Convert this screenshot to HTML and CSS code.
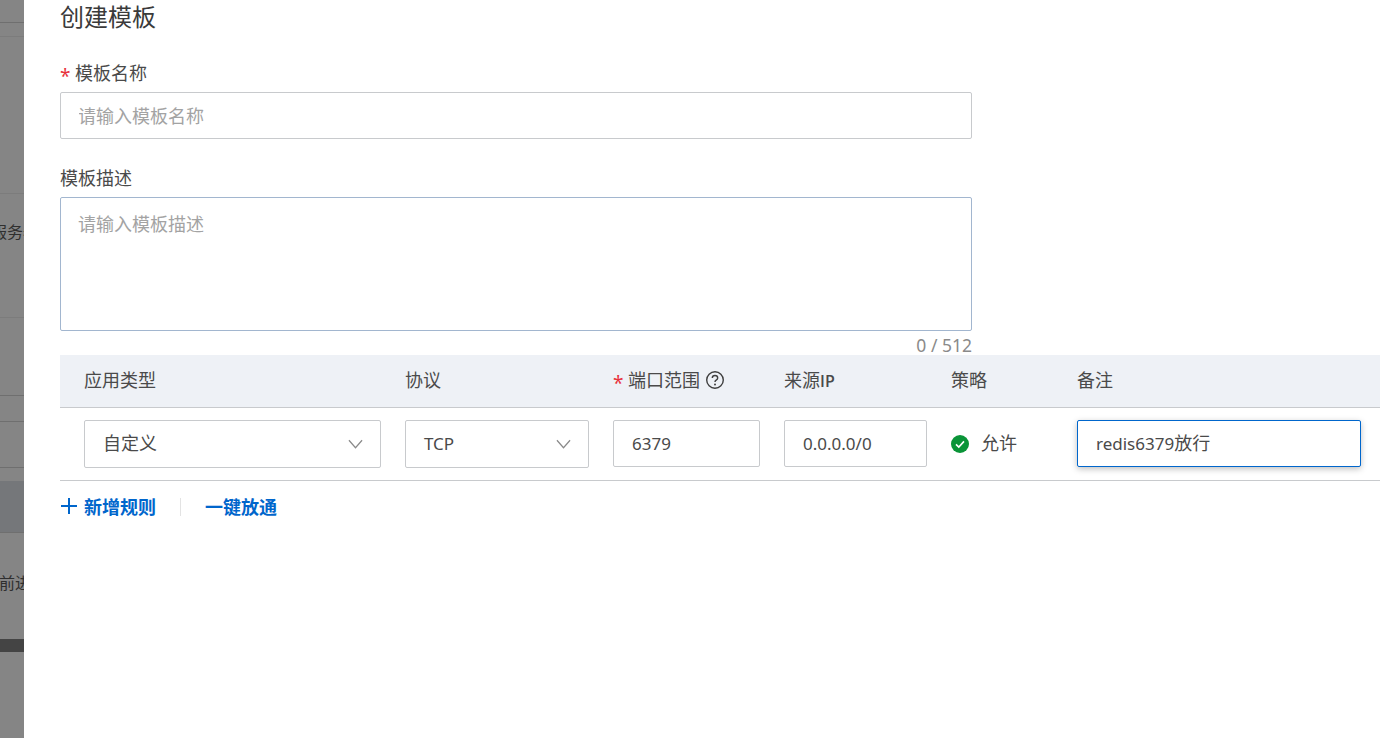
FILE: index.html
```html
<!DOCTYPE html>
<html lang="zh-CN">
<head>
<meta charset="utf-8">
<title>创建模板</title>
<link rel="stylesheet" href="styles.css">
</head>
<body>
<div class="page">
  <div class="backdrop" aria-hidden="true">
    <div class="bd-row line"></div>
    <div class="bd-row faint"></div>
    <div class="bd-row faint"></div>
    <div class="bd-row faint bd-text-top"><span>服务器</span></div>
    <div class="bd-row line"></div>
    <div class="bd-row line"></div>
    <div class="bd-row line"></div>
    <div class="bd-row"></div>
    <div class="bd-row cool line"></div>
    <div class="bd-row bd-text-mid"><span>前进</span></div>
    <div class="bd-row"></div>
    <div class="bd-row dark"></div>
    <div class="bd-row"></div>
  </div>
  <main class="drawer">
    <h1 class="title">创建模板</h1>
    <label class="label"><span class="star">*</span>模板名称</label>
    <input class="field name-field" type="text" placeholder="请输入模板名称">
    <label class="label desc-label">模板描述</label>
    <textarea class="field desc-field" placeholder="请输入模板描述"></textarea>
    <div class="counter">0 / 512</div>

    <div class="table">
      <div class="grid head">
        <div>应用类型</div>
        <div>协议</div>
        <div class="port-head"><span><span class="star">*</span>端口范围</span><svg class="help" viewBox="0 0 18 18" width="18" height="18"><circle cx="9" cy="9" r="8.3" fill="none" stroke="#3f3f3f" stroke-width="1.4"/><path d="M6.3 7.1C6.3 5.5 7.5 4.5 9 4.5s2.7 1 2.7 2.4c0 1.1-.7 1.7-1.5 2.2-.8.5-1.2 1-1.2 1.9" fill="none" stroke="#3f3f3f" stroke-width="1.4"/><circle cx="9" cy="13.5" r="1" fill="#3f3f3f"/></svg></div>
        <div>来源<b class="ip">IP</b></div>
        <div>策略</div>
        <div>备注</div>
      </div>
      <div class="grid body">
        <div class="select"><span class="cjk">自定义</span>
          <svg class="chev" viewBox="0 0 16 10" width="15" height="10"><path d="M1 1l7 8 7-8" fill="none" stroke="#8a8a8a" stroke-width="1.3"/></svg>
        </div>
        <div class="select latin">TCP
          <svg class="chev" viewBox="0 0 16 10" width="15" height="10"><path d="M1 1l7 8 7-8" fill="none" stroke="#8a8a8a" stroke-width="1.3"/></svg>
        </div>
        <input class="field cell latin" type="text" value="6379">
        <input class="field cell latin" type="text" value="0.0.0.0/0">
        <div class="policy">
          <svg viewBox="0 0 18 18" width="18" height="18"><circle cx="9" cy="9" r="9" fill="#0a9438"/><path d="M5 9.3l2.8 2.7L13 6.4" fill="none" stroke="#fff" stroke-width="1.6"/></svg>
          <span class="cjk">允许</span>
        </div>
        <div class="field cell focus" role="textbox" contenteditable="true"><span class="latin">redis6379</span>放行</div>
      </div>
    </div>

    <div class="actions">
      <a class="link add">
        <svg viewBox="0 0 16 16" width="16" height="16"><path d="M8 0v16M0 8h16" stroke="#0066cc" stroke-width="2"/></svg>
        新增规则
      </a>
      <span class="divider"></span>
      <a class="link">一键放通</a>
    </div>
  </main>
</div>
</body>
</html>
```
FILE: styles.css
```css
* { box-sizing: border-box; }
html, body { margin: 0; height: 100%; }
body {
  font-family: "Noto Sans CJK SC", "Noto Sans", sans-serif;
  font-size: 18px;
  color: #4a4a4a;
  background: #fff;
  overflow: hidden;
}
.page { display: flex; height: 738px; }

.backdrop {
  width: 24px;
  flex: none;
  overflow: hidden;
  display: grid;
  grid-template-rows: 23px 14px 157px 124px 78px 26px 46px 13px 52px 100px 6px 13px 1fr;
  background: #858585;
  color: #2f2f2f;
  font-size: 16px;
}
.bd-row { min-height: 0; white-space: nowrap; }
.line { border-bottom: 1px solid #6f6f6f; }
.faint { border-bottom: 1px solid #7c7c7c; }
.cool { background: #75777a; }
.dark { background: #444; }
.bd-text-top { padding-top: 25px; line-height: 24px; }
.bd-text-top span { margin-left: -9px; }
.bd-text-mid { padding-top: 37px; line-height: 24px; }
.bd-text-mid span { margin-left: -1px; }

.drawer { flex: 1; min-width: 0; padding: 1px 0 0 36px; background: #fff; }
.title { margin: 0 0 30px; font-size: 24px; font-weight: 400; line-height: 30px; color: #3a3a3a; }
.label { display: block; line-height: 22px; margin-bottom: 9px; }
.desc-label { margin-top: 27px; }
.star {
  display: inline-block;
  width: 9px;
  height: 14px;
  margin-right: 6px;
  font: 19px/14px "Noto Sans", sans-serif;
  color: #e8323c;
  vertical-align: -3px;
}

.field {
  display: block;
  border: 1px solid #c8cacd;
  border-radius: 2px;
  font: inherit;
  color: inherit;
  background: #fff;
  padding: 0 18px;
  outline: none;
}
.field::placeholder { color: #a3a3a3; opacity: 1; }
.name-field { width: 912px; height: 47px; padding: 0 17px 2px 18px; text-indent: -1px; }
.desc-field { width: 912px; height: 134px; padding: 10px 17px 0; line-height: 30px; resize: none; border-color: #a2b6cf; }
.counter { width: 912px; text-align: right; line-height: 20px; margin-top: 4px; font-family: "Noto Sans", sans-serif; font-size: 17.5px; color: #8a8a8a; }

.grid {
  display: grid;
  grid-template-columns: 297px 184px 147px 143px 102px 284px;
  column-gap: 24px;
  padding-left: 24px;
  align-items: center;
}
.head { height: 53px; background: #eef1f6; border-bottom: 1px solid #c8cacd; padding-bottom: 4px; }
.port-head { display: flex; align-items: center; gap: 6px; }
.help { margin-top: 2px; }
.ip { font-family: "Open Sans", sans-serif; font-size: 16px; font-weight: 600; }
.body { height: 73px; border-bottom: 1px solid #c8cacd; padding-bottom: 1px; }

.select {
  height: 48px;
  border: 1px solid #c8cacd;
  border-radius: 2px;
  padding: 0 17px 0 18px;
  display: flex;
  align-items: center;
  justify-content: space-between;
}
.cjk { margin-bottom: 4px; }
.latin { font-family: "Noto Sans", sans-serif; font-size: 17px; }
.cell { width: 100%; height: 47px; line-height: 45px; margin-bottom: 1px; }
.policy { display: flex; align-items: center; gap: 12px; }
.focus {
  border-color: #0066cc;
  box-shadow: 0 2px 6px rgba(0, 0, 0, .25);
  white-space: nowrap;
  line-height: 42px;
}

.actions { display: flex; align-items: center; gap: 24px; margin-top: 13px; height: 24px; }
.link { display: flex; align-items: center; gap: 7px; color: #0066cc; font-weight: 700; }
.add svg { margin-left: 1px; }
.divider { width: 1px; height: 18px; margin-top: 2px; background: #e3e3e3; }
```
